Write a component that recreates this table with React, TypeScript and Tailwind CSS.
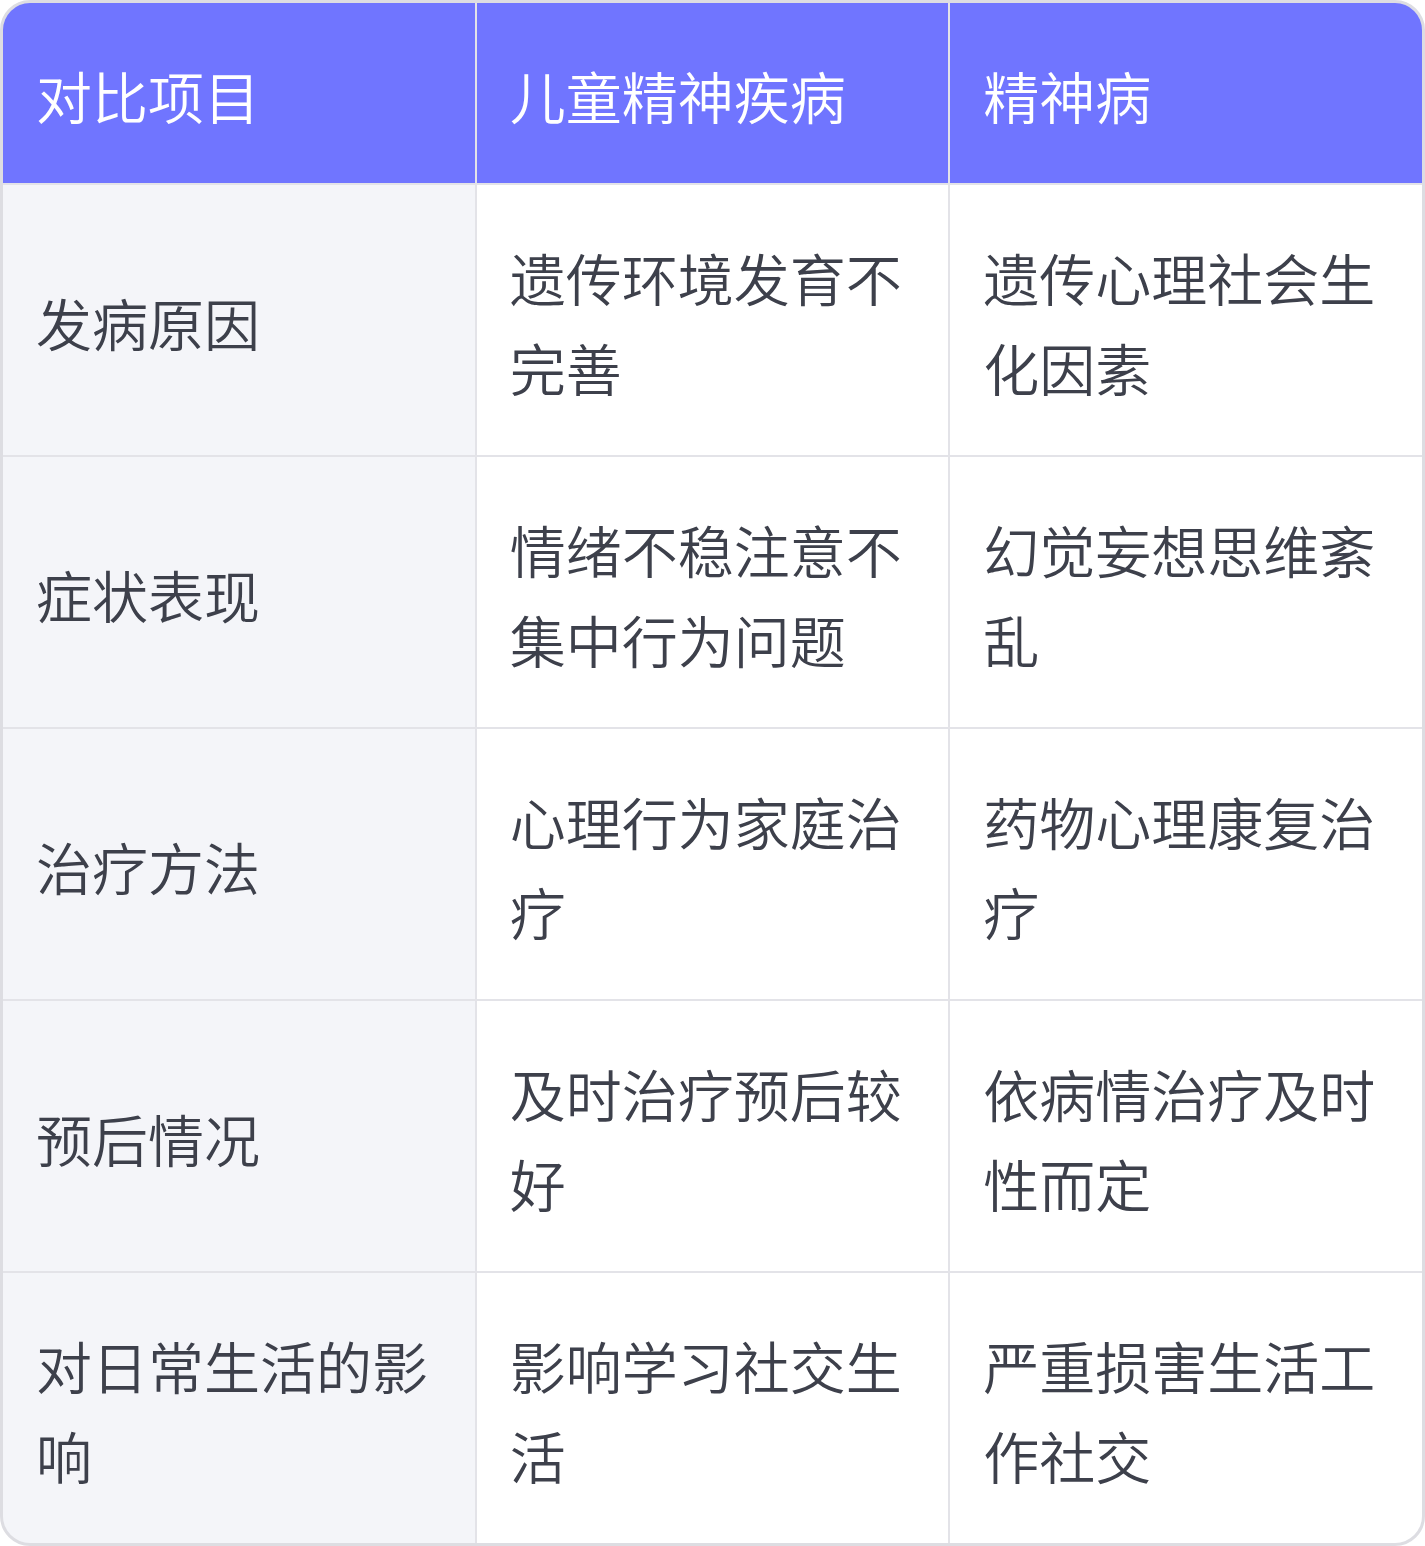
const header = ["对比项目", "儿童精神疾病", "精神病"];

const rows: [string, string, string][] = [
  ["发病原因", "遗传环境发育不完善", "遗传心理社会生化因素"],
  ["症状表现", "情绪不稳注意不集中行为问题", "幻觉妄想思维紊乱"],
  ["治疗方法", "心理行为家庭治疗", "药物心理康复治疗"],
  ["预后情况", "及时治疗预后较好", "依病情治疗及时性而定"],
  ["对日常生活的影响", "影响学习社交生活", "严重损害生活工作社交"],
];

export default function App() {
  return (
    <div
      className="w-[1425px] h-[1546px] bg-white"
      style={{ fontFamily: '"Noto Sans CJK SC", "Noto Sans", sans-serif' }}
    >
      <div className="grid grid-cols-3 gap-[2px] h-full border-[3px] border-[#dddde2] rounded-[30px] overflow-hidden bg-[#e3e3e8] text-[56px] leading-[90px] font-[350]">
        {header.map((h) => (
          <div key={h} className="bg-[#7075ff] text-white pl-[33px] pr-[34px] pt-[47px] pb-[43px] flex items-center">
            {h}
          </div>
        ))}
        {rows.map((row) =>
          row.map((cell, i) => (
            <div
              key={row[0] + i}
              className={`pl-[33px] pr-[34px] pt-[47px] pb-[43px] h-[270px] flex items-center text-[#3d404b] ${
                i === 0 ? "bg-[#f4f5f9]" : "bg-white"
              }`}
            >
              <span className="break-all">{cell}</span>
            </div>
          ))
        )}
      </div>
    </div>
  );
}
